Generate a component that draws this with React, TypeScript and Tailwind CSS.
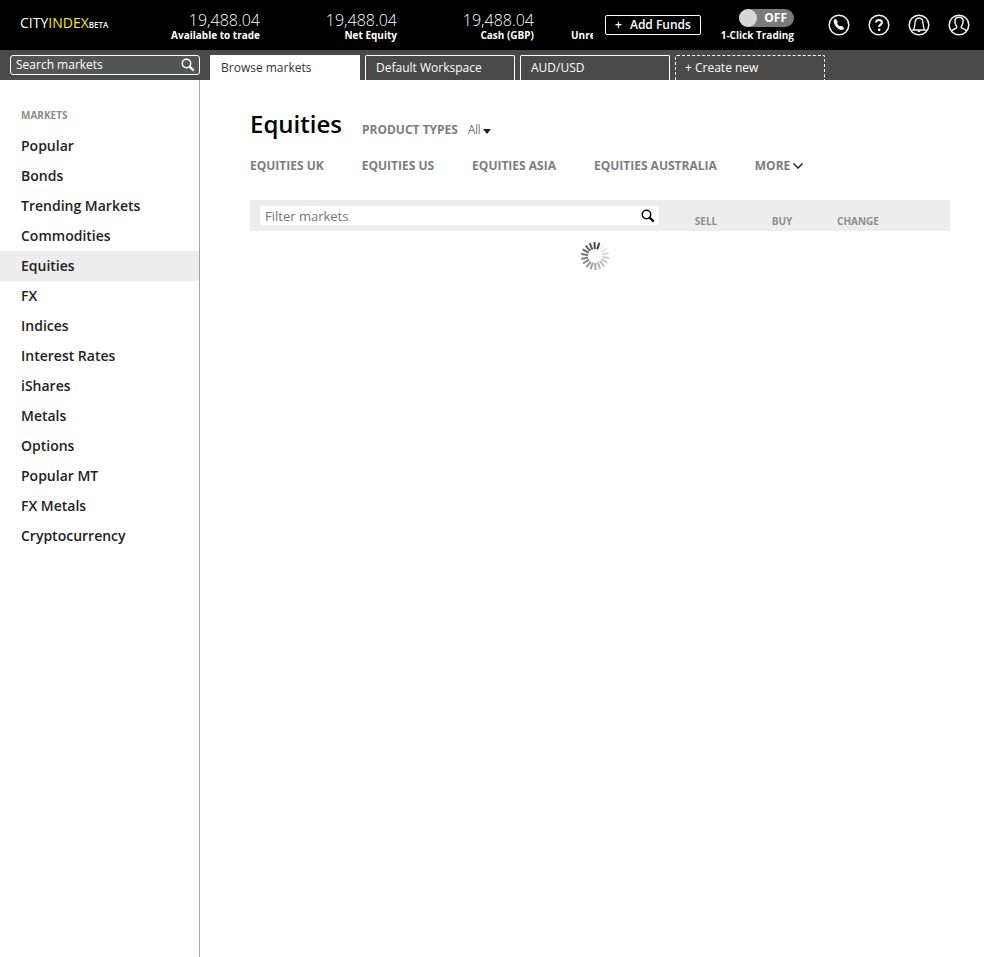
import type { ReactNode } from "react";

const balances = [
  { label: "Available to trade", value: "19,488.04" },
  { label: "Net Equity", value: "19,488.04" },
  { label: "Cash (GBP)", value: "19,488.04" },
];

const markets = [
  "Popular",
  "Bonds",
  "Trending Markets",
  "Commodities",
  "Equities",
  "FX",
  "Indices",
  "Interest Rates",
  "iShares",
  "Metals",
  "Options",
  "Popular MT",
  "FX Metals",
  "Cryptocurrency",
];

const regions = ["EQUITIES UK", "EQUITIES US", "EQUITIES ASIA", "EQUITIES AUSTRALIA"];

function SearchIcon({ className }: { className: string }) {
  return (
    <svg viewBox="0 0 14 14" className={className} fill="none" stroke="currentColor" aria-hidden="true">
      <circle cx="5.5" cy="5.5" r="4.2" strokeWidth="1.5" />
      <path d="M8.6 8.6 12.8 12.6" strokeWidth="2.2" />
    </svg>
  );
}

function RoundButton({ label, children }: { label: string; children: ReactNode }) {
  return (
    <button type="button" aria-label={label} className="size-[22px]">
      <svg viewBox="0 0 22 22" className="size-full" fill="none" stroke="#f2f2f2" aria-hidden="true">
        <circle cx="11" cy="11" r="9.8" strokeWidth="1.5" />
        {children}
      </svg>
    </button>
  );
}

function Header() {
  return (
    <header className="flex h-[50px] items-center bg-black text-white">
      <a href="#" aria-label="City Index Beta" className="flex w-[123px] shrink-0 items-baseline pb-[2px] pl-5 whitespace-nowrap">
        <span className="text-[14px] leading-4">CITY</span>
        <span className="text-[14px] leading-4 text-[#ffee00]">INDEX</span>
        <span className="text-[8px] leading-4 font-semibold">BETA</span>
      </a>
      <dl className="flex h-full min-w-0 flex-1 overflow-hidden pt-3">
        {balances.map((b) => (
          <div key={b.label} className="flex w-[137px] shrink-0 flex-col-reverse justify-end text-right">
            <dt className="text-[10px] leading-3 font-bold">{b.label}</dt>
            <dd className="text-[16px] leading-[17px] font-light">{b.value}</dd>
          </div>
        ))}
        <div className="shrink-0 pt-[17px] pl-[37px]">
          <dt className="text-[10px] leading-3 font-bold">Unrealised</dt>
        </div>
      </dl>
      <button
        type="button"
        className="ml-3 flex h-5 w-24 shrink-0 items-center justify-center gap-2 rounded-[2px] border border-white text-[12px] leading-4 font-semibold"
      >
        <span>+</span>
        <span>Add Funds</span>
      </button>
      <label className="ml-5 flex w-[73px] shrink-0 cursor-pointer flex-col items-end">
        <input type="checkbox" className="peer sr-only" />
        <span className="flex h-[18px] w-[55px] items-center justify-between rounded-full bg-[#7b7b7b] pr-[7px] text-[12px] leading-4 font-bold">
          <span className="size-[18px] rounded-full bg-[#d6d6d6]" />
          OFF
        </span>
        <span className="mt-[2px] text-[10px] leading-3 font-bold whitespace-nowrap">1-Click Trading</span>
      </label>
      <nav aria-label="Account" className="mr-[14px] ml-[34px] flex shrink-0 gap-[18px]">
        <RoundButton label="Contact">
          <path
            d="M5.700 6.300c1-1.600 2.400-1.500 3-.3l.9 1.700c.3.6-.2 1-.4 1.500.5 1.200 1.500 2.300 2.900 3 .5-.2 1-.6 1.500-.2l1.700 1.100c1.200.9.700 2.200-.6 2.700-4.300 1-9.600-4.700-9-9.500Z"
            fill="#f2f2f2"
            stroke="none"
          />
        </RoundButton>
        <RoundButton label="Help">
          <path d="M8 8.600c0-3.400 6-3.400 6 0 0 2-2.900 2-2.900 4.300" strokeWidth="2.100" />
          <circle cx="11.100" cy="15.800" r="1.400" fill="#f2f2f2" stroke="none" />
        </RoundButton>
        <RoundButton label="Alerts">
          <path d="M5 16c1.800-1.700 1.700-3.800 1.900-6.500.2-3.400 1.700-5.500 4.100-5.500s3.900 2.100 4.100 5.500c.2 2.700.1 4.800 1.900 6.500Z" strokeWidth="1.400" />
          <path d="M9.300 16.500h3.400c-.2 2.200-3.200 2.200-3.400 0Z" fill="#f2f2f2" stroke="none" />
        </RoundButton>
        <RoundButton label="Profile">
          <path
            d="M3.800 17c.6-1.600 1.900-2.100 3.800-2.600 1.400-.4 1.400-1.500.7-2.600C7.200 10 6.600 8 6.900 6.300c.4-2 2-3 4.100-3s3.700 1 4.100 3c.3 1.700-.3 3.700-1.400 5.500-.7 1.100-.7 2.200.7 2.600 1.900.5 3.200 1 3.800 2.600"
            strokeWidth="1.500"
          />
        </RoundButton>
      </nav>
    </header>
  );
}

function WorkspaceBar() {
  return (
    <div className="flex h-[30px] items-end bg-[#4a4a4a] text-white">
      <form role="search" className="mb-[5px] ml-[10px] flex h-5 w-[190px] shrink-0 items-center rounded-[3px] border border-white bg-[#545655] pr-1 pl-[5px]">
        <input
          type="text"
          aria-label="Search markets"
          placeholder="Search markets"
          className="min-w-0 flex-1 bg-transparent text-[12px] leading-4 font-medium outline-none placeholder:text-white placeholder:opacity-100"
        />
        <button type="submit" aria-label="Search">
          <SearchIcon className="size-[14px]" />
        </button>
      </form>
      <nav aria-label="Workspaces" className="ml-[10px] flex min-w-0 flex-1 gap-[5px] text-[12px] leading-4">
        <button type="button" className="h-[25px] w-[150px] border border-b-0 border-white bg-white px-[10px] text-left text-[#333]">
          Browse markets
        </button>
        <button type="button" className="h-[25px] w-[150px] rounded-t-[2px] border border-b-0 border-white px-[10px] text-left font-medium">
          Default Workspace
        </button>
        <button type="button" className="h-[25px] w-[150px] rounded-t-[2px] border border-b-0 border-white px-[10px] text-left font-medium">
          AUD/USD
        </button>
        <button type="button" className="h-[25px] w-[150px] rounded-t-[2px] border border-b-0 border-dashed border-white px-[9px] text-left font-medium">
          + Create new
        </button>
      </nav>
    </div>
  );
}

function Sidebar() {
  return (
    <nav aria-label="Markets" className="w-[200px] shrink-0 border-r border-[#a3a3a3] pt-7">
      <h2 className="pl-[21px] text-[10px] leading-[15px] font-bold text-[#8c8c8c]">MARKETS</h2>
      <ul className="mt-2 text-[14px] leading-[30px] font-semibold text-[#222]">
        {markets.map((name) => (
          <li key={name} className={name === "Equities" ? "bg-[#ededed]" : ""}>
            <a href="#" className="block pl-[21px]">
              {name}
            </a>
          </li>
        ))}
      </ul>
    </nav>
  );
}

const spokes = Array.from({ length: 18 }, (_, i) => ({
  angle: 18 - i * 20,
  opacity: 0.85 - i * 0.046,
}));

function Spinner() {
  return (
    <svg viewBox="0 0 30 30" className="size-[30px]" role="img" aria-label="Loading" stroke="#222" strokeWidth="2">
      {spokes.map((s) => (
        <line key={s.angle} x1="15" y1="1" x2="15" y2="8" opacity={s.opacity} transform={`rotate(${s.angle} 15 15)`} />
      ))}
    </svg>
  );
}

function Browse() {
  return (
    <main className="min-w-0 flex-1 pt-[26px] pr-[34px] pl-[50px]">
      <div className="flex items-end">
        <h1 className="text-[24px] leading-9 font-semibold text-black">Equities</h1>
        <span className="mb-1 ml-5 text-[12px] leading-4 font-bold text-[#7d7d7d]">PRODUCT TYPES</span>
        <button type="button" className="mb-1 ml-[10px] flex items-center gap-[2px] text-[12px] leading-4 font-light text-[#222]">
          All
          <svg viewBox="0 0 8 5" className="mt-[3px] h-[5px] w-2" fill="#222" aria-hidden="true">
            <path d="M0 0h8L4 5Z" />
          </svg>
        </button>
      </div>
      <nav aria-label="Regions" className="mt-4 flex gap-[38px] text-[12px] leading-4 font-bold text-[#7d7d7d]">
        {regions.map((r) => (
          <a key={r} href="#">
            {r}
          </a>
        ))}
        <button type="button" className="flex items-center gap-[3px]">
          MORE
          <svg viewBox="0 0 10 6" className="h-[6px] w-[10px]" fill="none" stroke="#222" strokeWidth="1.5" aria-hidden="true">
            <path d="m.5.5 4.500 4.500L9.500.5" />
          </svg>
        </button>
      </nav>
      <table className="mt-[26px] w-full table-fixed border-collapse">
        <thead>
          <tr className="h-[31px] bg-[#ededed] text-[10px] leading-3 font-bold text-[#8c8c8c]">
            <th scope="col" className="pr-[9px] pl-[10px] text-left">
              <div className="flex h-[19px] items-center rounded-[3px] bg-white pr-1 pl-[5px]">
                <input
                  type="text"
                  aria-label="Filter markets"
                  placeholder="Filter markets"
                  className="min-w-0 flex-1 bg-transparent text-[13px] leading-4 font-normal text-black outline-none placeholder:text-[#757575]"
                />
                <button type="button" aria-label="Filter" className="text-black">
                  <SearchIcon className="size-[14px]" />
                </button>
              </div>
            </th>
            <th scope="col" className="w-[76px] pt-[10px]">SELL</th>
            <th scope="col" className="w-[76px] pt-[10px]">BUY</th>
            <th scope="col" className="w-[76px] pt-[10px]">CHANGE</th>
            <td className="w-[54px]" />
          </tr>
        </thead>
        <tbody>
          <tr>
            <td colSpan={5} className="pt-[10px] pr-[10px]">
              <div className="flex justify-center">
                <Spinner />
              </div>
            </td>
          </tr>
        </tbody>
      </table>
    </main>
  );
}

export default function App() {
  return (
    <div className="flex min-h-screen flex-col bg-white font-['Open_Sans',sans-serif]">
      <Header />
      <WorkspaceBar />
      <div className="flex flex-1">
        <Sidebar />
        <Browse />
      </div>
    </div>
  );
}
